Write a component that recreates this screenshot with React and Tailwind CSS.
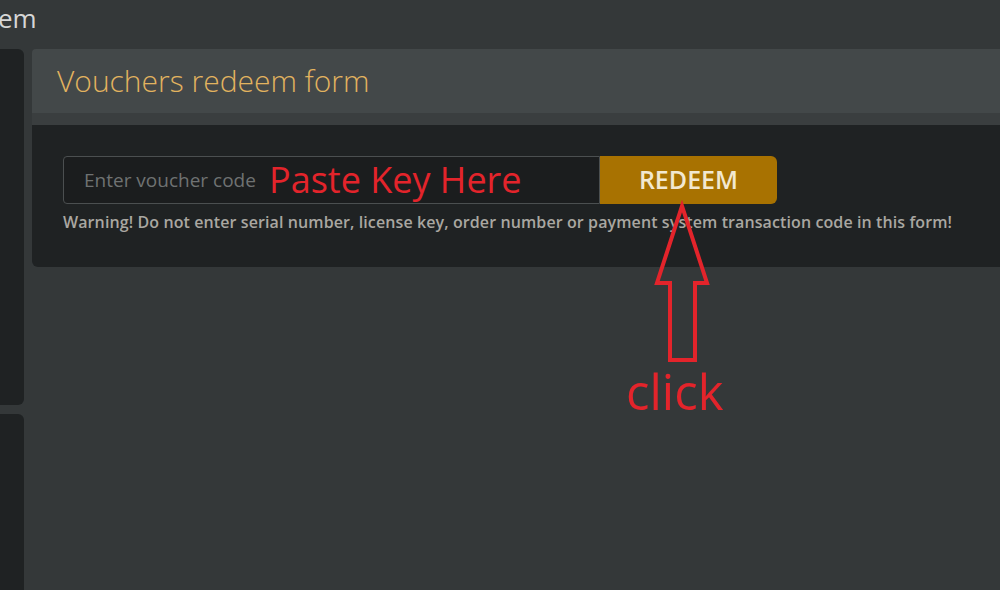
import { useState } from "react";

const sans = { fontFamily: '"Open Sans", "Noto Sans", sans-serif' };

function Sidebar() {
  return (
    <div className="flex w-[24px] shrink-0 flex-col gap-[9px]">
      <div className="h-[356px] rounded-r-md bg-[#1f2223]" />
      <div className="flex-1 rounded-tr-md bg-[#1f2223]" />
    </div>
  );
}

function RedeemForm() {
  const [code, setCode] = useState("");

  return (
    <div className="flex-1">
      <div className="flex h-[64px] items-center rounded-tl-sm bg-[#434849] px-[25px]">
        <h1 className="text-[30px] font-light leading-none text-[#e2b35f]">
          Vouchers redeem form
        </h1>
      </div>
      <div className="h-[12px] bg-[#3a3e3f]" />
      <div className="h-[142px] rounded-bl-md bg-[#1f2223] pl-[31px] pt-[31px]">
        <div className="flex h-[48px]">
          <input
            value={code}
            onChange={(e) => setCode(e.target.value)}
            placeholder="Enter voucher code"
            className="h-full w-[537px] rounded-l-sm border border-[#4b4f50] bg-[#1b1d1e] pl-[20px] text-[19px] text-[#cfcfcf] outline-none placeholder:text-[#6f7272]"
          />
          <button className="h-full w-[177px] rounded-r-md bg-[#a87201] text-[25px] font-semibold text-[#f2e8d0]">
            REDEEM
          </button>
        </div>
        <p className="mt-[7px] text-[16px] font-semibold leading-[22px] tracking-[0.1px] text-[#a9a7a1]">
          Warning! Do not enter serial number, license key, order number or
          payment system transaction code in this form!
        </p>
      </div>
    </div>
  );
}

export default function App() {
  return (
    <div
      className="relative h-[590px] w-full overflow-hidden bg-[#343839]"
      style={sans}
    >
      <div className="flex h-[49px] items-start">
        <span className="-ml-[2px] mt-[1px] text-[26px] leading-[34px] text-[#d6d6d6]">
          em
        </span>
      </div>
      <div className="flex h-[541px] gap-[8px]">
        <Sidebar />
        <RedeemForm />
      </div>

      {/* annotations on top of the screenshot */}
      <span className="pointer-events-none absolute left-[269px] top-[158px] text-[36px] leading-[44px] text-[#e3242b]">
        Paste Key Here
      </span>
      <svg
        className="pointer-events-none absolute left-[650px] top-[200px]"
        width="66"
        height="170"
        viewBox="0 0 66 170"
      >
        <polygon
          points="32,6 7,83 20,83 20,160 45,160 45,83 57,83"
          fill="none"
          stroke="#e3242b"
          strokeWidth="4"
          strokeLinejoin="miter"
        />
      </svg>
      <span className="pointer-events-none absolute left-[626px] top-[361px] text-[49px] leading-[60px] text-[#e3242b]">
        click
      </span>
    </div>
  );
}
